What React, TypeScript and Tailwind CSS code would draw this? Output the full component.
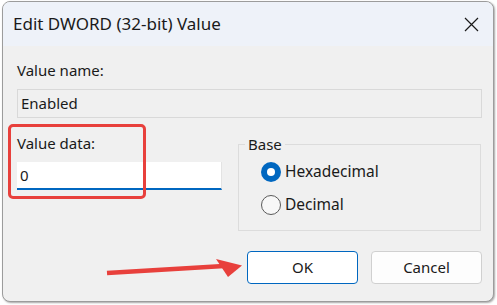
import { useState } from 'react';

export default function App() {
    const [value, setValue] = useState('0');
    const [base, setBase] = useState<'hex' | 'dec'>('hex');

    return (
        <div className="relative w-[497px] h-[305px] bg-white overflow-hidden text-[#1a1a1a] [font-family:'Noto_Sans','Open_Sans',sans-serif]">
            {/* Window */}
            <div className="ml-[2px] mt-[1px] w-[492px] h-[301px] rounded-[8px] border border-[#9c9c9c] bg-[#f0f0f0] overflow-hidden shadow-[1px_1px_2px_rgba(0,0,0,0.35)]">
                {/* Title bar */}
                <div className="h-[44px] bg-[#eef2f9] flex items-center justify-between pl-[10px] pr-[14px]">
                    <span className="text-[17px] leading-[22px]">Edit DWORD (32-bit) Value</span>
                    <svg width="15" height="15" viewBox="0 0 15 15" className="text-[#1a1a1a]">
                        <path d="M1 1 L14 14 M14 1 L1 14" stroke="currentColor" strokeWidth="1.2" fill="none" />
                    </svg>
                </div>

                {/* Body */}
                <div className="pl-[14px] pr-[11px] pt-[14px]">
                    <div className="text-[15px] leading-[20px]">Value name:</div>
                    <div className="mt-[9px] h-[29px] border border-[#d9d9d9] bg-[#f0f0f0] flex items-center px-[3px] text-[15px]">
                        Enabled
                    </div>

                    <div className="flex gap-[16px] mt-[15px]">
                        {/* Value data */}
                        <div className="w-[205px]">
                            <div className="text-[15px] leading-[20px]">Value data:</div>
                            <div className="mt-[9px] h-[28px] bg-white border-r border-[#e3e3e3] border-b-2 border-b-[#0067c0] flex items-center px-[3px]">
                                <input
                                    value={value}
                                    onChange={(e) => setValue(e.target.value)}
                                    className="w-full bg-transparent outline-none text-[15px] leading-[20px] caret-black"
                                />
                            </div>
                        </div>

                        {/* Base */}
                        <fieldset className="w-[243px] h-[97px] mt-[1px] border border-[#dcdcdc]">
                            <legend className="ml-[6px] px-[3px] text-[15px] leading-[20px]">Base</legend>
                            <div className="pl-[22px] pt-[6px] flex flex-col gap-[9px]">
                                <button onClick={() => setBase('hex')} className="h-[24px] flex items-center gap-[4px] text-[15.5px]">
                                    <span className={base === 'hex'
                                        ? 'w-[20px] h-[20px] rounded-full bg-[#0067c0] flex items-center justify-center'
                                        : 'w-[20px] h-[20px] rounded-full border border-[#5a5a5a] bg-[#f7f7f7]'}>
                                        {base === 'hex' && <span className="w-[8px] h-[8px] rounded-full bg-white" />}
                                    </span>
                                    Hexadecimal
                                </button>
                                <button onClick={() => setBase('dec')} className="h-[24px] flex items-center gap-[4px] text-[15.5px]">
                                    <span className={base === 'dec'
                                        ? 'w-[20px] h-[20px] rounded-full bg-[#0067c0] flex items-center justify-center'
                                        : 'w-[20px] h-[20px] rounded-full border border-[#5a5a5a] bg-[#f7f7f7]'}>
                                        {base === 'dec' && <span className="w-[8px] h-[8px] rounded-full bg-white" />}
                                    </span>
                                    Decimal
                                </button>
                            </div>
                        </fieldset>
                    </div>

                    {/* Buttons */}
                    <div className="flex justify-end gap-[13px] mt-[20px]">
                        <button className="w-[111px] h-[33px] rounded-[4px] border border-[#0067c0] bg-white text-[15px]">OK</button>
                        <button className="w-[111px] h-[33px] rounded-[4px] border border-[#d0d0d0] bg-[#fdfdfd] text-[15px]">Cancel</button>
                    </div>
                </div>
            </div>

            {/* Annotations */}
            <div className="absolute left-[8px] top-[124px] w-[138px] h-[75px] border-[3px] border-[#e8403c] rounded-[5px] pointer-events-none" />
            <svg className="absolute left-0 top-0 pointer-events-none" width="497" height="305">
                <path d="M107 273 L224 266" stroke="#e8403c" strokeWidth="4.5" strokeLinecap="butt" />
                <path d="M216 259 L242 265.5 L228 277 L222 268 Z" fill="#e8403c" />
            </svg>
        </div>
    );
}
